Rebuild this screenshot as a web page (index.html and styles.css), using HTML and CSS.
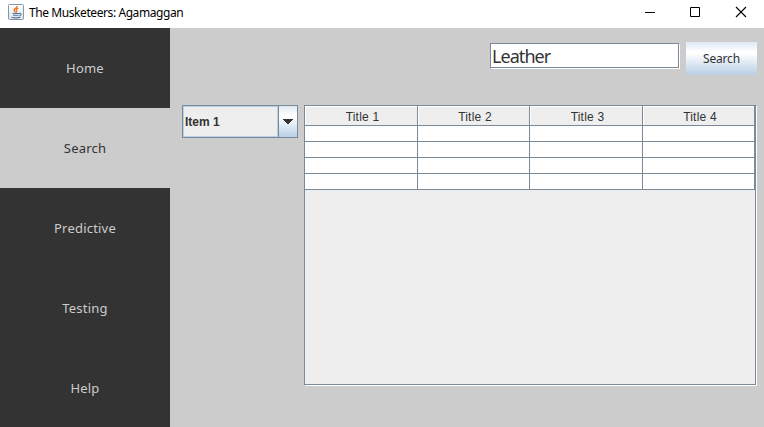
FILE: index.html
```html
<!DOCTYPE html>
<html lang="en">
<head>
<meta charset="utf-8">
<title>The Musketeers: Agamaggan</title>
<link rel="stylesheet" href="styles.css">
</head>
<body>
<header class="titlebar">
  <svg class="app-icon" width="16" height="16" viewBox="0 0 16 16" fill="none">
    <defs><linearGradient id="tile" x1="0" y1="0" x2="0" y2="1"><stop offset="0" stop-color="#fff"/><stop offset="1" stop-color="#dde3ea"/></linearGradient></defs>
    <rect x=".5" y=".5" width="15" height="15" rx="1" fill="url(#tile)" stroke="#8498ac"/>
    <path d="M8.800 1.800C10 4 5.800 4.500 6 6.200C6.100 7.200 7.500 7.500 7.300 8.700M10.300 4.200C8.500 5 7.800 5.500 8.500 6.600C9 7.400 8.900 8 8.300 8.600" stroke="#ed7a25" stroke-width="1.400"/>
    <path d="M4.500 9.500H11M5 11.200H10.500M11 9.500C13.800 8.800 13.600 11.300 11.300 11.700M3.500 13.300C6 14.300 10.500 14 12.300 13" stroke="#537a9d" stroke-width="1.100"/>
  </svg>
  <span class="window-title">The Musketeers: Agamaggan</span>
  <div class="window-controls">
    <svg width="12" height="12" viewBox="0 0 12 12" shape-rendering="crispEdges"><path d="M1 6h10v1H1z"/></svg>
    <svg width="12" height="12" viewBox="0 0 12 12" fill="none" stroke="#000"><path d="M1.500 1.500h9v9h-9z"/></svg>
    <svg width="12" height="12" viewBox="0 0 12 12" fill="none" stroke="#000" stroke-width="1.100"><path d="M1 1l10 10M11 1L1 11"/></svg>
  </div>
</header>
<div class="app">
  <nav class="sidebar">
    <a class="nav-item"><span>Home</span></a>
    <a class="nav-item active"><span>Search</span></a>
    <a class="nav-item"><span>Predictive</span></a>
    <a class="nav-item"><span>Testing</span></a>
    <a class="nav-item"><span>Help</span></a>
  </nav>
  <main class="content">
    <div class="searchbar">
      <div class="search-field"><span>Leather</span></div>
      <div class="search-button"><span>Search</span></div>
    </div>
    <div class="results">
      <div class="combo">
        <div class="combo-value">Item 1</div>
        <div class="combo-arrow"><svg width="10" height="5" viewBox="0 0 10 5" shape-rendering="crispEdges" fill="#333"><path d="M0 0h10v1H9v1H8v1H7v1H6v1H4V4H3V3H2V2H1V1H0z"/></svg></div>
      </div>
      <div class="scrollpane">
        <div class="grid">
          <div class="head">Title 1</div><div class="head">Title 2</div><div class="head">Title 3</div><div class="head">Title 4</div>
          <div class="cell"></div><div class="cell"></div><div class="cell"></div><div class="cell"></div>
          <div class="cell"></div><div class="cell"></div><div class="cell"></div><div class="cell"></div>
          <div class="cell"></div><div class="cell"></div><div class="cell"></div><div class="cell"></div>
          <div class="cell"></div><div class="cell"></div><div class="cell"></div><div class="cell"></div>
        </div>
      </div>
    </div>
  </main>
</div>
</body>
</html>
```
FILE: styles.css
```css
* { box-sizing: border-box; }
body {
  margin: 0;
  width: 764px;
  height: 427px;
  overflow: hidden;
  display: flex;
  flex-direction: column;
  background: #ccc;
  color: #333;
  font-family: "Noto Sans", sans-serif;
}
.titlebar {
  display: flex;
  align-items: center;
  flex: none;
  height: 28px;
  padding: 0 17px 4px 8px;
  background: #fff;
  color: #000;
}
.window-title {
  margin-left: 5px;
  font-size: 12px;
  letter-spacing: -0.42px;
  line-height: 16px;
  padding-top: 1px;
}
.window-controls { display: flex; gap: 34px; margin-left: auto; }
.window-controls svg:first-child { margin-right: -1px; }
.app { display: flex; flex: 1; min-height: 0; }
.sidebar { width: 170px; background: #333; overflow: hidden; flex: none; }
.nav-item {
  display: flex;
  align-items: center;
  justify-content: center;
  height: 80px;
  padding: 0 0 1px 0;
  color: #ccc;
  font-size: 13px;
  letter-spacing: 0.2px;
}
.nav-item.active { background: #ccc; color: #333; }
.content { flex: 1; padding: 14px 7px 0 12px; }
.searchbar { display: flex; justify-content: flex-end; gap: 6px; height: 63px; }
.search-field {
  width: 190px;
  height: 26px;
  margin-top: 1px;
  padding-left: 1px;
  background: #fff;
  border: 1px solid #7a8a99;
  box-shadow: inset -1px -1px #7a8a99;
  border-right-color: #fff;
  border-bottom-color: #fff;
  font-size: 18px;
  line-height: 25px;
  letter-spacing: -0.95px;
}
.search-button {
  display: flex;
  align-items: center;
  justify-content: center;
  width: 71px;
  height: 33px;
  background: linear-gradient(#dde8f3 0, #fff 30%, #fff 34%, #b8cfe5 100%);
  font-size: 12px;
  letter-spacing: -0.2px;
}
.results { display: flex; gap: 6px; }
.combo {
  display: flex;
  width: 116px;
  height: 33px;
  border: 1px solid #7a8a99;
  font: bold 12px "Liberation Sans", sans-serif;
}
.combo-value {
  flex: 1;
  padding-left: 1px;
  line-height: 30px;
  background: #eee;
  border: 1px solid #b8cfe5;
}
.combo-arrow {
  display: flex;
  align-items: center;
  justify-content: center;
  width: 19px;
  border-left: 1px solid #7a8a99;
  background: linear-gradient(#dde8f3 0, #fff 30%, #fff 34%, #b8cfe5 100%);
}
.scrollpane {
  width: 453px;
  height: 281px;
  background: #eee;
  border: 1px solid #7a8a99;
  border-right-color: #fff;
  border-bottom-color: #fff;
  box-shadow: inset -1px -1px #7a8a99;
}
.grid {
  display: grid;
  width: 450px;
  grid-template-columns: 113px 112px 113px 112px;
  grid-template-rows: 20px repeat(4, 16px);
  font: 12px "Liberation Sans", sans-serif;
}
.head, .cell { border-right: 1px solid #7a8a99; border-bottom: 1px solid #7a8a99; }
.head {
  background: #eee;
  box-shadow: inset 1px 1px #fff;
  line-height: 23px;
  padding-left: 3px;
  text-align: center;
  letter-spacing: 0.2px;
}
.cell { background: #fff; }
```
